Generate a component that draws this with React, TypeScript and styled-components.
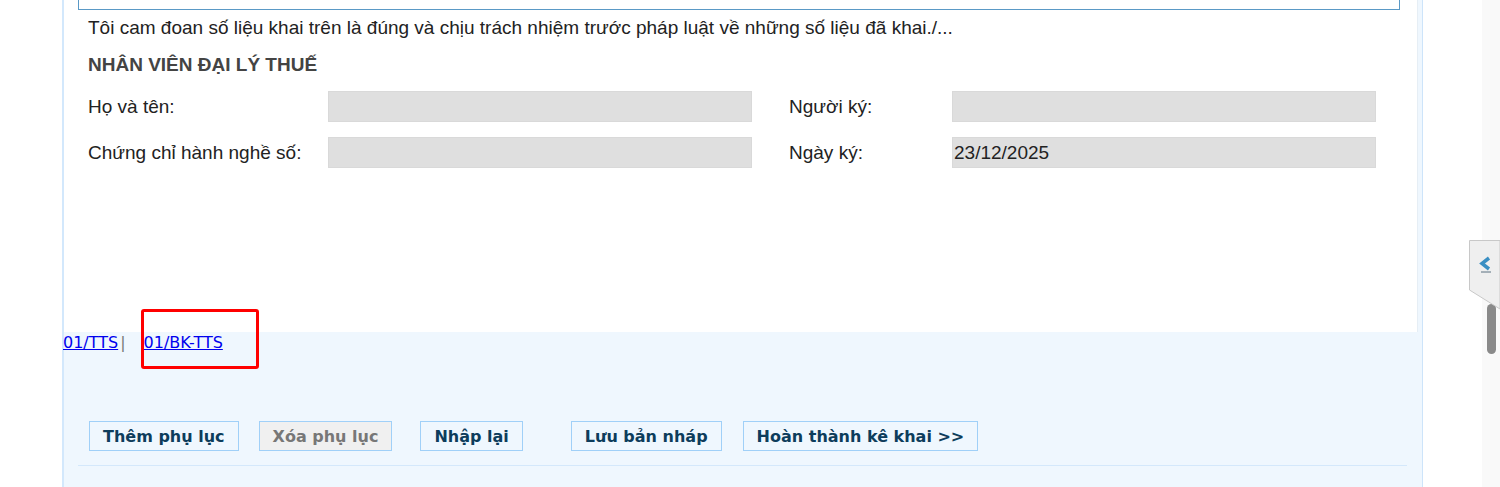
import React from 'react';
import styled, { createGlobalStyle } from 'styled-components';

const GlobalStyle = createGlobalStyle`
  html, body {
    margin: 0;
    padding: 0;
    background: #ffffff;
    overflow: hidden;
  }
  body {
    font-family: "Liberation Sans", Arial, sans-serif;
  }
`;

const Page = styled.div`
  position: relative;
  display: flex;
  height: 487px;
  overflow: hidden;
  background: #ffffff;
`;

const Panel = styled.div`
  box-sizing: border-box;
  width: 1361px;
  margin-left: 62px;
  display: flex;
  flex-direction: column;
  background: #eff7fe;
  border-left: 2px solid #d3e8fc;
  border-right: 1px solid #cde4fa;
  padding-right: 4px;
`;

const Sheet = styled.div`
  height: 332px;
  background: #ffffff;
  border-right: 1px solid #e6eef5;
  display: flex;
  flex-direction: column;
`;

const TopBox = styled.div`
  width: 1320px;
  height: 9px;
  margin-left: 14px;
  border: 1px solid #5a99c6;
  border-top: none;
`;

const Declaration = styled.p`
  margin: 8px 0 0 24px;
  font-size: 19px;
  line-height: 20px;
  color: #222222;
`;

const SectionTitle = styled.h3`
  margin: 17px 0 0 24px;
  font-size: 19px;
  line-height: 20px;
  font-weight: bold;
  color: #444444;
`;

const FormGrid = styled.div`
  display: grid;
  grid-template-columns: auto auto;
  justify-content: start;
  column-gap: 37px;
  row-gap: 15px;
  margin: 16px 0 0 24px;
`;

const Field = styled.div`
  display: flex;
  align-items: center;
`;

const Label = styled.span<{ $width: number }>`
  width: ${(p) => p.$width}px;
  font-size: 19px;
  color: #222222;
`;

const Input = styled.div`
  box-sizing: border-box;
  width: 424px;
  height: 31px;
  padding: 0 1px;
  display: flex;
  align-items: center;
  background: #dfdfdf;
  border: 1px solid #d9d9d9;
  font-size: 19px;
  color: #222222;
`;

const TabBar = styled.div`
  display: flex;
  align-items: center;
  height: 20px;
  margin-left: -1px;
  font-family: "DejaVu Sans", Verdana, sans-serif;
  font-size: 16px;
`;

const TabLink = styled.a`
  color: #0000ee;
  text-decoration: underline;
  cursor: pointer;
`;

const Separator = styled.span`
  color: #777777;
  margin: 0 18px 0 2px;
`;

const Actions = styled.div`
  display: flex;
  gap: 20px;
  margin: 69px 0 0 25px;
`;

const ActionButton = styled.button<{ $disabled?: boolean; $extra?: number }>`
  box-sizing: border-box;
  height: 30px;
  padding: 0 13px;
  margin-left: ${(p) => p.$extra ?? 0}px;
  font-family: "DejaVu Sans", Tahoma, sans-serif;
  font-size: 16px;
  font-weight: bold;
  color: ${(p) => (p.$disabled ? '#777777' : '#0d3d5c')};
  background: ${(p) => (p.$disabled ? '#f0f0f0' : '#eff7fe')};
  border: 1px solid #a0d0f8;
  border-radius: 0;
  cursor: ${(p) => (p.$disabled ? 'default' : 'pointer')};
`;

const Divider = styled.hr`
  margin: 14px 11px 0 14px;
  border: none;
  border-top: 1px solid #d4e8fb;
`;

const Spacer = styled.div`
  flex: 1;
`;

const ScrollTrack = styled.div`
  width: 18px;
  background: #f9f9f9;
  display: flex;
  justify-content: center;
`;

const ScrollThumb = styled.div`
  width: 9px;
  height: 50px;
  margin-top: 304px;
  border-radius: 5px;
  background: #8a8a8a;
`;

const SideTab = styled.div`
  position: absolute;
  left: 1469px;
  top: 240px;
  width: 31px;
  height: 70px;
`;

const Highlight = styled.div`
  position: absolute;
  left: 141px;
  top: 309px;
  width: 118px;
  height: 60px;
  box-sizing: border-box;
  border: 3px solid #ff0000;
  border-radius: 3px;
`;

const buttons = [
  { label: 'Thêm phụ lục' },
  { label: 'Xóa phụ lục', disabled: true },
  { label: 'Nhập lại', extra: 8 },
  { label: 'Lưu bản nháp', extra: 28 },
  { label: 'Hoàn thành kê khai >>', extra: 1 },
];

export default function App() {
  return (
    <>
      <GlobalStyle />
      <Page>
        <Panel>
          <Sheet>
            <TopBox />
            <Declaration>
              Tôi cam đoan số liệu khai trên là đúng và chịu trách nhiệm trước pháp luật về những số liệu đã khai./...
            </Declaration>
            <SectionTitle>NHÂN VIÊN ĐẠI LÝ THUẾ</SectionTitle>
            <FormGrid>
              <Field>
                <Label $width={240}>Họ và tên:</Label>
                <Input />
              </Field>
              <Field>
                <Label $width={163}>Người ký:</Label>
                <Input />
              </Field>
              <Field>
                <Label $width={240}>Chứng chỉ hành nghề số:</Label>
                <Input />
              </Field>
              <Field>
                <Label $width={163}>Ngày ký:</Label>
                <Input>23/12/2025</Input>
              </Field>
            </FormGrid>
          </Sheet>
          <TabBar>
            <TabLink>01/TTS</TabLink>
            <Separator>|</Separator>
            <TabLink>01/BK-TTS</TabLink>
          </TabBar>
          <Actions>
            {buttons.map((b) => (
              <ActionButton key={b.label} $disabled={b.disabled} $extra={b.extra}>
                {b.label}
              </ActionButton>
            ))}
          </Actions>
          <Divider />
        </Panel>
        <Spacer />
        <ScrollTrack>
          <ScrollThumb />
        </ScrollTrack>
        <SideTab>
          <svg width="31" height="70" viewBox="0 0 31 70">
            <polygon points="0.5,0.5 31,0.5 31,69 0.5,50" fill="#efefef" stroke="#c8c8c8" strokeWidth="1" />
            <polyline points="20,18 13,23.5 20,29" fill="none" stroke="#3a8fc3" strokeWidth="3.5" strokeLinejoin="miter" />
            <line x1="12" y1="32" x2="22" y2="32" stroke="#5a7080" strokeWidth="1" />
          </svg>
        </SideTab>
        <Highlight />
      </Page>
    </>
  );
}
